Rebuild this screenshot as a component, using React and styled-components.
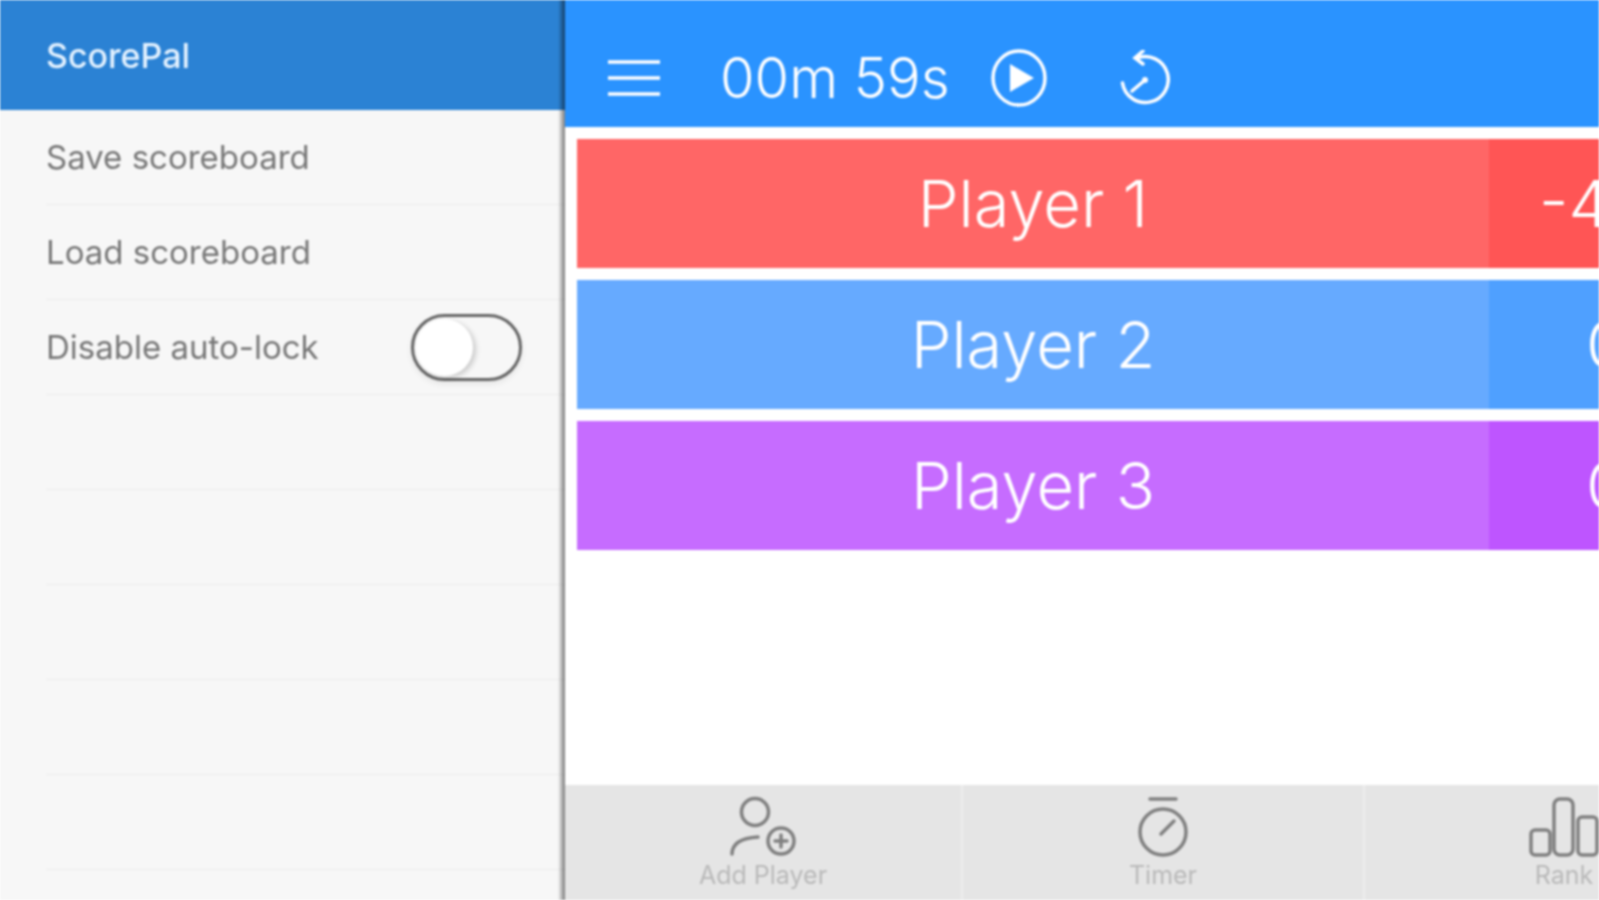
import React from "react";
import styled, { createGlobalStyle } from "styled-components";

const GlobalStyle = createGlobalStyle`
  html, body {
    margin: 0;
    padding: 0;
    height: 100%;
    overflow: hidden;
    background: #fff;
    font-family: Inter, Roboto, "Liberation Sans", sans-serif;
  }
`;

const Page = styled.div`
  display: flex;
  width: 1599px;
  height: 900px;
  overflow: hidden;
  filter: blur(0.8px);
`;

const Sidebar = styled.aside`
  flex: 0 0 565px;
  display: flex;
  flex-direction: column;
  background: #f7f7f7;
  position: relative;

  /* drawer shadow falls inside its right edge */
  &::after {
    content: "";
    position: absolute;
    top: 0;
    right: 0;
    bottom: 0;
    width: 7px;
    background: linear-gradient(to right, rgba(0, 0, 0, 0), rgba(0, 0, 0, 0.5));
  }
`;

const SideHeader = styled.div`
  height: 110px;
  flex: none;
  display: flex;
  align-items: center;
  padding-left: 46px;
  background: #2b82d4;
  color: #e4f2ff;
  font-size: 34px;
  font-weight: 500;
`;

const MenuRow = styled.div`
  height: 94px;
  margin-left: 46px;
  padding-right: 43px;
  flex: none;
  display: flex;
  align-items: center;
  justify-content: space-between;
  border-bottom: 1px solid #ececec;
  color: #777;
  font-size: 33px;
`;

const Toggle = styled.div`
  width: 105px;
  height: 61px;
  border: 3px solid #666;
  border-radius: 34px;
  display: flex;
  align-items: center;
  background: #f7f7f7;
  box-shadow: 0 3px 6px rgba(0, 0, 0, 0.08);
`;

const Knob = styled.div`
  width: 57px;
  height: 57px;
  margin-left: 2px;
  border-radius: 50%;
  background: #fff;
  box-shadow: 3px 2px 5px rgba(0, 0, 0, 0.18);
`;

const Main = styled.main`
  flex: 1;
  min-width: 0;
  display: flex;
  flex-direction: column;
  background: #fff;
`;

const TopBar = styled.header`
  height: 98px;
  padding: 29px 0 0 43px;
  flex: none;
  display: flex;
  align-items: center;
  background: #2a93ff;
  color: #fff;
`;

const MenuIcon = styled.svg`
  flex: none;
  margin-right: 60px;
`;

const Clock = styled.div`
  width: 226px;
  margin-right: 45px;
  flex: none;
  font-size: 56px;
  font-weight: 300;
  white-space: nowrap;
`;

const RestartIcon = styled.svg`
  flex: none;
  margin-left: 73px;
`;

const Board = styled.div`
  flex: 1;
  display: flex;
  flex-direction: column;
  gap: 12px;
  padding: 12px 0 0 12px;
`;

const PlayerRow = styled.div`
  height: 129px;
  flex: none;
  display: flex;
  color: #fff;
  font-size: 65px;
  font-weight: 300;
  background: ${(p) => p.$bg};
`;

const PlayerName = styled.div`
  flex: 0 0 912px;
  display: flex;
  align-items: center;
  justify-content: center;
`;

const PlayerScore = styled.div`
  flex: 0 0 240px;
  display: flex;
  align-items: center;
  padding-left: ${(p) => p.$inset}px;
  box-sizing: border-box;
  background: ${(p) => p.$bg};
`;

const TabBar = styled.nav`
  height: 115px;
  flex: none;
  display: flex;
  background: #e5e5e5;
`;

const Tab = styled.div`
  flex: 0 0 ${(p) => p.$width}px;
  padding-top: 11px;
  display: flex;
  flex-direction: column;
  align-items: center;
  border-right: 2px solid #eeeeee;
  box-sizing: border-box;
  color: #b9b9b9;
  font-size: 25px;
`;

const TabIcon = styled.svg`
  flex: none;
  fill: none;
  stroke: #808080;
  stroke-width: 3.5;
  stroke-linecap: round;
`;

const TabLabel = styled.div`
  margin-top: 2px;
  white-space: nowrap;
`;

const players = [
  { name: "Player 1", score: "-4", bg: "#ff6666", dark: "#ff5555", inset: 50 },
  { name: "Player 2", score: "0", bg: "#66aaff", dark: "#4fa0ff", inset: 97 },
  { name: "Player 3", score: "0", bg: "#c66cff", dark: "#be55ff", inset: 97 },
];

const emptyRows = [0, 1, 2, 3, 4];

export default function App() {
  return (
    <Page>
      <GlobalStyle />
      <Sidebar>
        <SideHeader>ScorePal</SideHeader>
        <MenuRow>Save scoreboard</MenuRow>
        <MenuRow>Load scoreboard</MenuRow>
        <MenuRow>
          Disable auto-lock
          <Toggle>
            <Knob />
          </Toggle>
        </MenuRow>
        {emptyRows.map((n) => (
          <MenuRow key={n} />
        ))}
      </Sidebar>
      <Main>
        <TopBar>
          <MenuIcon width="52" height="36" viewBox="0 0 52 36" stroke="#fff" strokeWidth="3.5">
            <path d="M0 2h52M0 18h52M0 34h52" />
          </MenuIcon>
          <Clock>00m 59s</Clock>
          <svg width="56" height="58" viewBox="0 0 56 58" style={{ flex: "none" }}>
            <ellipse cx="28" cy="29" rx="26" ry="27" fill="none" stroke="#fff" strokeWidth="3.5" />
            <path d="M19 15 L43 29 L19 43 Z" fill="#fff" />
          </svg>
          <RestartIcon width="50" height="56" viewBox="0 0 50 56" fill="none" stroke="#fff" strokeWidth="3.5" strokeLinecap="round">
            <path d="M17 8 A23 23 0 1 1 2.5 33" />
            <path d="M23 1 L15 8 L23 14" />
            <path d="M25 30 L12 41" />
            <circle cx="25" cy="30" r="3" fill="#fff" stroke="none" />
          </RestartIcon>
        </TopBar>
        <Board>
          {players.map((p) => (
            <PlayerRow key={p.name} $bg={p.bg}>
              <PlayerName>{p.name}</PlayerName>
              <PlayerScore $bg={p.dark} $inset={p.inset}>{p.score}</PlayerScore>
            </PlayerRow>
          ))}
        </Board>
        <TabBar>
          <Tab $width={398}>
            <TabIcon width="66" height="62" viewBox="0 0 66 62">
              <circle cx="25" cy="16" r="13.5" />
              <path d="M2 58 C2 47 12 42 28 41" />
              <circle cx="51" cy="45" r="13" />
              <path d="M51 39v12M45 45h12" />
            </TabIcon>
            <TabLabel>Add Player</TabLabel>
          </Tab>
          <Tab $width={402}>
            <TabIcon width="50" height="62" viewBox="0 0 50 62">
              <path d="M12 3h26" />
              <circle cx="25" cy="36" r="23" />
              <path d="M23 38 L36 25" />
            </TabIcon>
            <TabLabel>Timer</TabLabel>
          </Tab>
          <Tab $width={400}>
            <TabIcon width="70" height="62" viewBox="0 0 70 62">
              <rect x="2" y="34" width="19" height="25" rx="4" />
              <rect x="25" y="3" width="19" height="56" rx="6" />
              <rect x="49" y="21" width="19" height="38" rx="4" />
            </TabIcon>
            <TabLabel>Rank</TabLabel>
          </Tab>
        </TabBar>
      </Main>
    </Page>
  );
}
